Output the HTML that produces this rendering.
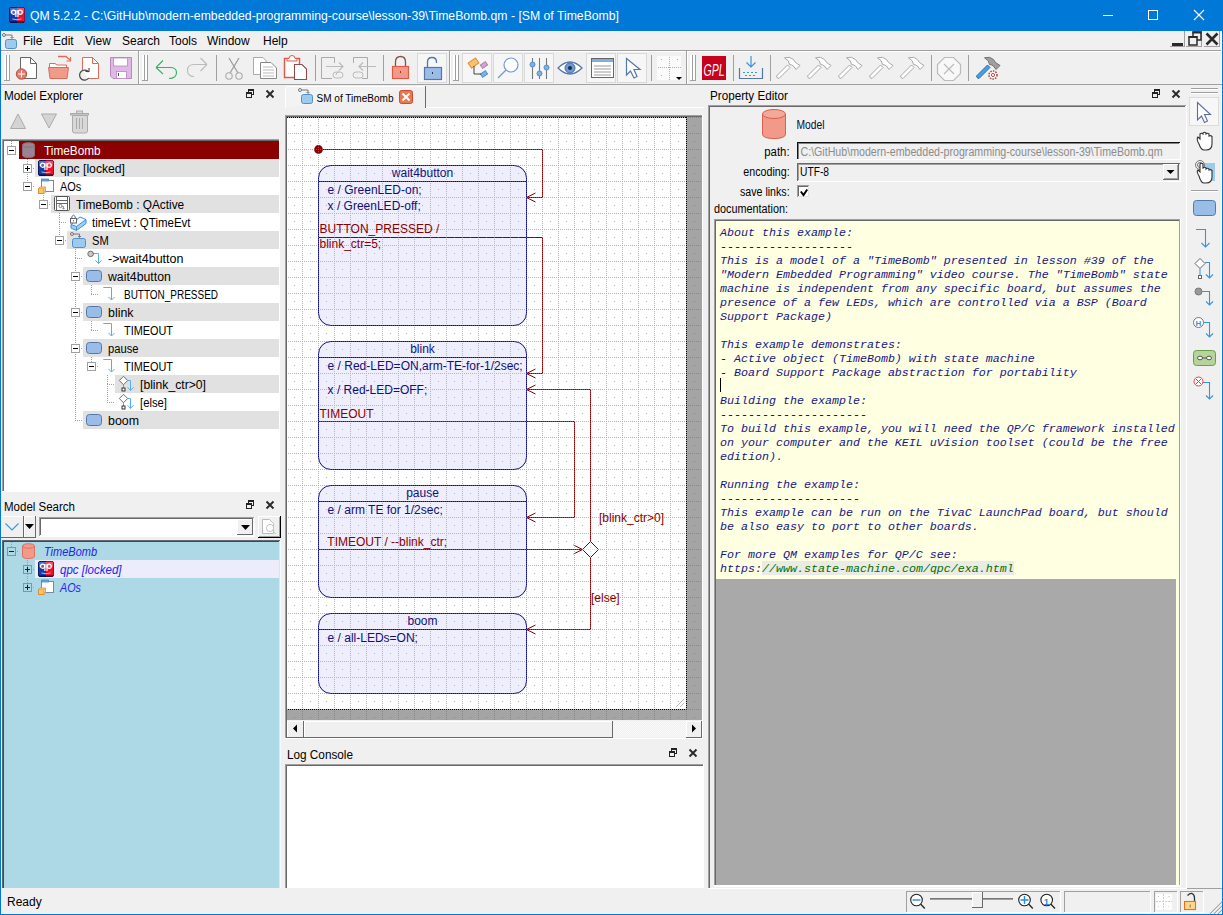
<!DOCTYPE html><html><head><meta charset="utf-8"><style>*{margin:0;padding:0}html,body{width:1223px;height:915px;overflow:hidden;background:#f0f0f0}svg{display:block}</style></head><body><svg width="1223" height="915" viewBox="0 0 1223 915" shape-rendering="auto"><rect x="0" y="0" width="1223" height="915" fill="#f0f0f0" />
<rect x="0" y="0" width="1223" height="31" fill="#0078d7" />
<text x="30" y="20" font-family="Liberation Sans" font-size="12" fill="#fff" textLength="589" lengthAdjust="spacingAndGlyphs" >QM 5.2.2 - C:\GitHub\modern-embedded-programming-course\lesson-39\TimeBomb.qm - [SM of TimeBomb]</text>
<rect x="1103" y="15" width="10" height="1" fill="#fff"/>
<rect x="1148.5" y="10.5" width="9" height="9" fill="none" stroke="#fff" stroke-width="1"/>
<path d="M1194 10 L1204 20 M1204 10 L1194 20" stroke="#fff" stroke-width="1.1"/>
<rect x="0" y="0" width="1" height="915" fill="#0078d7"/>
<rect x="1222" y="0" width="1" height="915" fill="#0078d7"/>
<rect x="0" y="914" width="1223" height="1" fill="#0078d7"/>
<rect x="1" y="50" width="1221" height="1" fill="#a0a0a0"/>
<rect x="1" y="51" width="1221" height="1" fill="#fff"/>
<text x="23" y="45" font-family="Liberation Sans" font-size="12" fill="#000" >File</text>
<text x="53" y="45" font-family="Liberation Sans" font-size="12" fill="#000" >Edit</text>
<text x="85" y="45" font-family="Liberation Sans" font-size="12" fill="#000" >View</text>
<text x="122" y="45" font-family="Liberation Sans" font-size="12" fill="#000" >Search</text>
<text x="169" y="45" font-family="Liberation Sans" font-size="12" fill="#000" >Tools</text>
<text x="207" y="45" font-family="Liberation Sans" font-size="12" fill="#000" >Window</text>
<text x="263" y="45" font-family="Liberation Sans" font-size="12" fill="#000" >Help</text>
<g transform="translate(2,33) scale(1.0)"><circle cx="2" cy="2" r="1.5" fill="none" stroke="#777" stroke-width="1"/><path d="M3.5 2 H10 V5" fill="none" stroke="#777" stroke-width="1"/><path d="M8.5 4 L10 5.5 L11.5 4" fill="none" stroke="#777" stroke-width="1"/><rect x="3.5" y="6.5" width="11" height="9" rx="2" fill="#9ccbee" stroke="#4f8fd0" stroke-width="1"/></g>
<rect x="1184" y="31" width="1" height="16" fill="#a0a0a0"/>
<rect x="1170" y="46" width="15" height="1" fill="#a0a0a0"/>
<rect x="1201" y="31" width="1" height="16" fill="#a0a0a0"/>
<rect x="1186" y="46" width="16" height="1" fill="#a0a0a0"/>
<rect x="1219" y="31" width="1" height="16" fill="#a0a0a0"/>
<rect x="1204" y="46" width="16" height="1" fill="#a0a0a0"/>
<rect x="1172" y="43" width="11" height="3" fill="#2a2a2a" />
<rect x="1193" y="32" width="8" height="8" fill="none" stroke="#2a2a2a" stroke-width="1.5"/><rect x="1192.5" y="31.5" width="9" height="2" fill="#2a2a2a"/>
<rect x="1189" y="37" width="8" height="8" fill="#f0f0f0" stroke="#2a2a2a" stroke-width="1.5"/><rect x="1188.5" y="36" width="9" height="2" fill="#2a2a2a"/>
<path d="M1206.5 33.5 L1217.5 44.5 M1217.5 33.5 L1206.5 44.5" stroke="#2a2a2a" stroke-width="2.6"/>
<rect x="1221" y="31" width="1" height="857" fill="#fff"/>
<rect x="1" y="84" width="1221" height="1" fill="#a0a0a0"/>
<text x="4" y="100" font-family="Liberation Sans" font-size="12" fill="#000" textLength="79" lengthAdjust="spacingAndGlyphs" >Model Explorer</text>
<g transform="translate(246,89)"><rect x="2.5" y="0.5" width="5" height="5" fill="none" stroke="#222" stroke-width="1"/><rect x="2" y="0" width="6" height="2" fill="#222"/><rect x="0.5" y="3.5" width="5" height="5" fill="#f0f0f0" stroke="#222" stroke-width="1"/><rect x="0" y="3" width="6" height="2" fill="#222"/></g>
<path d="M266.5 90.5 L273.5 97.5 M273.5 90.5 L266.5 97.5" stroke="#2a2a2a" stroke-width="1.9"/>
<path d="M10.5 128.5 L18 114 L25.5 128.5 Z" fill="#d4d4d4" stroke="#ababab" stroke-width="1"/>
<path d="M41.5 114 L56.5 114 L49 128 Z" fill="#d4d4d4" stroke="#ababab" stroke-width="1"/>
<g fill="#d8d8d8" stroke="#ababab" stroke-width="1"><path d="M72.5 115.5 H87.5 V131 Q87.5 133 85.5 133 H74.5 Q72.5 133 72.5 131 Z"/><rect x="70.5" y="113.5" width="18" height="1.5"/><rect x="76.5" y="111" width="6" height="2.5"/></g>
<path d="M76.5 118 V129 M79.5 118 V129 M82.5 118 V129" stroke="#aaa" stroke-width="1"/>
<rect x="2" y="139" width="280" height="353" fill="#fff" />
<rect x="280" y="139" width="2" height="353" fill="#f0f0f0" />
<rect x="2" y="139" width="278" height="1" fill="#a0a0a0"/>
<rect x="2" y="139" width="1" height="353" fill="#a0a0a0"/>
<rect x="3" y="140" width="276" height="1" fill="#696969"/>
<rect x="3" y="140" width="1" height="352" fill="#696969"/>
<rect x="279" y="139" width="1" height="353" fill="#fff"/>
<rect x="2" y="491" width="278" height="1" fill="#fff"/>
<rect x="19" y="141" width="260" height="18" fill="#8b0000" />
<rect x="35" y="159" width="244" height="18" fill="#e1e1e1" />
<rect x="51" y="195" width="228" height="18" fill="#e1e1e1" />
<rect x="67" y="231" width="212" height="18" fill="#e1e1e1" />
<rect x="83" y="267" width="196" height="18" fill="#e1e1e1" />
<rect x="83" y="303" width="196" height="18" fill="#e1e1e1" />
<rect x="83" y="339" width="196" height="18" fill="#e1e1e1" />
<rect x="115" y="375" width="164" height="18" fill="#e1e1e1" />
<rect x="83" y="411" width="196" height="18" fill="#e1e1e1" />
<line x1="11.5" y1="141" x2="11.5" y2="146" stroke="#a0a0a0" stroke-width="1" stroke-dasharray="1 1"/>
<line x1="27.5" y1="159" x2="27.5" y2="168" stroke="#a0a0a0" stroke-width="1" stroke-dasharray="1 1"/>
<line x1="27" y1="168.5" x2="35" y2="168.5" stroke="#a0a0a0" stroke-width="1" stroke-dasharray="1 1"/>
<line x1="27.5" y1="168" x2="27.5" y2="186" stroke="#a0a0a0" stroke-width="1" stroke-dasharray="1 1"/>
<line x1="27" y1="186.5" x2="35" y2="186.5" stroke="#a0a0a0" stroke-width="1" stroke-dasharray="1 1"/>
<line x1="43.5" y1="195" x2="43.5" y2="204" stroke="#a0a0a0" stroke-width="1" stroke-dasharray="1 1"/>
<line x1="43" y1="204.5" x2="51" y2="204.5" stroke="#a0a0a0" stroke-width="1" stroke-dasharray="1 1"/>
<line x1="59.5" y1="213" x2="59.5" y2="222" stroke="#a0a0a0" stroke-width="1" stroke-dasharray="1 1"/>
<line x1="59" y1="222.5" x2="67" y2="222.5" stroke="#a0a0a0" stroke-width="1" stroke-dasharray="1 1"/>
<line x1="59.5" y1="222" x2="59.5" y2="240" stroke="#a0a0a0" stroke-width="1" stroke-dasharray="1 1"/>
<line x1="59" y1="240.5" x2="67" y2="240.5" stroke="#a0a0a0" stroke-width="1" stroke-dasharray="1 1"/>
<line x1="75.5" y1="249" x2="75.5" y2="258" stroke="#a0a0a0" stroke-width="1" stroke-dasharray="1 1"/>
<line x1="75" y1="258.5" x2="83" y2="258.5" stroke="#a0a0a0" stroke-width="1" stroke-dasharray="1 1"/>
<line x1="75.5" y1="258" x2="75.5" y2="276" stroke="#a0a0a0" stroke-width="1" stroke-dasharray="1 1"/>
<line x1="75" y1="276.5" x2="83" y2="276.5" stroke="#a0a0a0" stroke-width="1" stroke-dasharray="1 1"/>
<line x1="91.5" y1="285" x2="91.5" y2="294" stroke="#a0a0a0" stroke-width="1" stroke-dasharray="1 1"/>
<line x1="91" y1="294.5" x2="99" y2="294.5" stroke="#a0a0a0" stroke-width="1" stroke-dasharray="1 1"/>
<line x1="75.5" y1="276" x2="75.5" y2="312" stroke="#a0a0a0" stroke-width="1" stroke-dasharray="1 1"/>
<line x1="75" y1="312.5" x2="83" y2="312.5" stroke="#a0a0a0" stroke-width="1" stroke-dasharray="1 1"/>
<line x1="91.5" y1="321" x2="91.5" y2="330" stroke="#a0a0a0" stroke-width="1" stroke-dasharray="1 1"/>
<line x1="91" y1="330.5" x2="99" y2="330.5" stroke="#a0a0a0" stroke-width="1" stroke-dasharray="1 1"/>
<line x1="75.5" y1="312" x2="75.5" y2="348" stroke="#a0a0a0" stroke-width="1" stroke-dasharray="1 1"/>
<line x1="75" y1="348.5" x2="83" y2="348.5" stroke="#a0a0a0" stroke-width="1" stroke-dasharray="1 1"/>
<line x1="91.5" y1="357" x2="91.5" y2="366" stroke="#a0a0a0" stroke-width="1" stroke-dasharray="1 1"/>
<line x1="91" y1="366.5" x2="99" y2="366.5" stroke="#a0a0a0" stroke-width="1" stroke-dasharray="1 1"/>
<line x1="107.5" y1="375" x2="107.5" y2="384" stroke="#a0a0a0" stroke-width="1" stroke-dasharray="1 1"/>
<line x1="107" y1="384.5" x2="115" y2="384.5" stroke="#a0a0a0" stroke-width="1" stroke-dasharray="1 1"/>
<line x1="107.5" y1="384" x2="107.5" y2="402" stroke="#a0a0a0" stroke-width="1" stroke-dasharray="1 1"/>
<line x1="107" y1="402.5" x2="115" y2="402.5" stroke="#a0a0a0" stroke-width="1" stroke-dasharray="1 1"/>
<line x1="75.5" y1="348" x2="75.5" y2="420" stroke="#a0a0a0" stroke-width="1" stroke-dasharray="1 1"/>
<line x1="75" y1="420.5" x2="83" y2="420.5" stroke="#a0a0a0" stroke-width="1" stroke-dasharray="1 1"/>
<rect x="7.5" y="146.5" width="8" height="8" fill="#fff" stroke="#a0a0a0" stroke-width="1"/>
<rect x="9" y="150" width="5" height="1" fill="#000"/>
<g transform="translate(22,142)"><path d="M0.5 3 V13 Q0.5 15.5 6.5 15.5 Q12.5 15.5 12.5 13 V3" fill="#9c8394" stroke="#8a6f80"/><ellipse cx="6.5" cy="3" rx="6" ry="2.3" fill="#9c8394" stroke="#8a6f80"/></g>
<text x="44" y="154.5" font-family="Liberation Sans" font-size="12" fill="#fff" textLength="56.6" lengthAdjust="spacingAndGlyphs" >TimeBomb</text>
<rect x="23.5" y="164.5" width="8" height="8" fill="#fff" stroke="#a0a0a0" stroke-width="1"/>
<rect x="25" y="168" width="5" height="1" fill="#000"/>
<rect x="27" y="166" width="1" height="5" fill="#000"/>
<g transform="translate(38,160)"><rect x="0.5" y="0.5" width="15" height="15" rx="1.5" fill="#1838a8" stroke="#0c1a60"/><path d="M8 0.5 H14 Q15.5 0.5 15.5 2 V14 Q15.5 15.5 14 15.5 H8 Z" fill="#f0102a"/><path d="M1 1 H15 V6 Q8 8 1 6 Z" fill="#fff" opacity="0.25"/><circle cx="4.6" cy="5.2" r="2.1" fill="none" stroke="#fff" stroke-width="1.2"/><path d="M6.9 3 V10" stroke="#fff" stroke-width="1.2"/><circle cx="11.2" cy="5.2" r="2.1" fill="none" stroke="#fff" stroke-width="1.2"/><path d="M9 3 V10" stroke="#fff" stroke-width="1.2"/><path d="M3.5 12 Q8 13.5 12.5 12" fill="none" stroke="#fff" stroke-width="0.8" opacity="0.8"/><path d="M1 15 H15" stroke="#000830" stroke-width="1"/></g>
<text x="60" y="172.5" font-family="Liberation Sans" font-size="12" fill="#000" textLength="65" lengthAdjust="spacingAndGlyphs" >qpc [locked]</text>
<rect x="23.5" y="182.5" width="8" height="8" fill="#fff" stroke="#a0a0a0" stroke-width="1"/>
<rect x="25" y="186" width="5" height="1" fill="#000"/>
<g transform="translate(38,178)"><rect x="3.5" y="2.5" width="12" height="11" fill="#fff" stroke="#7a8a96"/><rect x="3.5" y="1" width="7" height="2" fill="#6aa8e0" stroke="#4a88c8" stroke-width="0.8"/><rect x="0.5" y="10.5" width="5.5" height="5" fill="#f7c46a" stroke="#e09030"/><path d="M0.5 10.5 L2 9 H7.5 L6 10.5 M7.5 9 V14 L6 15.5" fill="#f9d890" stroke="#e09030" stroke-width="0.8"/></g>
<text x="60" y="190.5" font-family="Liberation Sans" font-size="12" fill="#000" textLength="21.3" lengthAdjust="spacingAndGlyphs" >AOs</text>
<rect x="39.5" y="200.5" width="8" height="8" fill="#fff" stroke="#a0a0a0" stroke-width="1"/>
<rect x="41" y="204" width="5" height="1" fill="#000"/>
<g transform="translate(54,196)"><rect x="0.5" y="0.5" width="15" height="14" rx="1" fill="#fff" stroke="#555"/><path d="M2.5 0.5 V14.5 M13.5 0.5 V14.5 M2.5 4.5 H13.5 M2.5 7.5 H13.5" stroke="#666" stroke-width="1"/><circle cx="6.5" cy="10" r="1.6" fill="none" stroke="#777" stroke-width="0.9"/><path d="M8 10.5 H9.5 V13 M8.5 12 L9.5 13.2 L10.5 12" fill="none" stroke="#777" stroke-width="0.8"/></g>
<text x="76" y="208.5" font-family="Liberation Sans" font-size="12" fill="#000" textLength="108.2" lengthAdjust="spacingAndGlyphs" >TimeBomb : QActive</text>
<g transform="translate(70,214)"><path d="M1 10.5 L1 14 L6.5 16.5 L16 9.5 L16 5.5 Z" fill="#a4cff2" stroke="#3a8ee0" stroke-width="1" stroke-linejoin="round"/><path d="M1 10.5 L10 3 L16 5.5 L6.5 12.5 Z" fill="#f2f8fe" stroke="#3a8ee0" stroke-width="1" stroke-linejoin="round"/><path d="M6.5 12.5 V16.5" stroke="#3a8ee0"/><path d="M1.8 4.5 V2.5 Q3.5 -0.2 5.2 2.5 V4.5" fill="none" stroke="#666" stroke-width="1"/><rect x="0.5" y="4.5" width="6" height="4.5" fill="#fff" stroke="#666"/><rect x="3" y="6.3" width="1" height="1" fill="#444"/></g>
<text x="92" y="226.5" font-family="Liberation Sans" font-size="12" fill="#000" textLength="98.5" lengthAdjust="spacingAndGlyphs" >timeEvt : QTimeEvt</text>
<rect x="55.5" y="236.5" width="8" height="8" fill="#fff" stroke="#a0a0a0" stroke-width="1"/>
<rect x="57" y="240" width="5" height="1" fill="#000"/>
<g transform="translate(70,232)"><circle cx="2" cy="2" r="1.5" fill="#ddd" stroke="#777" stroke-width="1"/><path d="M3.5 2 H9.5 V5" fill="none" stroke="#777"/><path d="M8 4 L9.5 5.5 L11 4" fill="none" stroke="#777"/><rect x="2.5" y="6.5" width="13" height="9" rx="2" fill="#9ccbee" stroke="#4f8fd0"/></g>
<text x="92" y="244.5" font-family="Liberation Sans" font-size="12" fill="#000" textLength="16.7" lengthAdjust="spacingAndGlyphs" >SM</text>
<g transform="translate(86,250)"><path d="M7 3.5 H12.5 V13.5" fill="none" stroke="#5aaee6"/><path d="M9.3 10.3 L12.5 13.6 L15.7 10.3" fill="none" stroke="#5aaee6"/><circle cx="4.6" cy="3.9" r="2.8" fill="#c8c8c8" stroke="#666" stroke-width="0.9"/></g>
<text x="108" y="262.5" font-family="Liberation Sans" font-size="12" fill="#000" textLength="75.5" lengthAdjust="spacingAndGlyphs" >-&gt;wait4button</text>
<rect x="71.5" y="272.5" width="8" height="8" fill="#fff" stroke="#a0a0a0" stroke-width="1"/>
<rect x="73" y="276" width="5" height="1" fill="#000"/>
<g transform="translate(86,268)"><rect x="0.5" y="2.5" width="15" height="11" rx="3" fill="#9abde8" stroke="#5576a8"/></g>
<text x="108" y="280.5" font-family="Liberation Sans" font-size="12" fill="#000" textLength="62.8" lengthAdjust="spacingAndGlyphs" >wait4button</text>
<g transform="translate(102,286)"><path d="M1.3 1.5 H9.5 V13.8" fill="none" stroke="#5aaee6"/><path d="M6.5 11 L9.5 14 L12.5 11" fill="none" stroke="#5aaee6"/></g>
<text x="124" y="298.5" font-family="Liberation Sans" font-size="12" fill="#000" textLength="94" lengthAdjust="spacingAndGlyphs" >BUTTON_PRESSED</text>
<rect x="71.5" y="308.5" width="8" height="8" fill="#fff" stroke="#a0a0a0" stroke-width="1"/>
<rect x="73" y="312" width="5" height="1" fill="#000"/>
<g transform="translate(86,304)"><rect x="0.5" y="2.5" width="15" height="11" rx="3" fill="#9abde8" stroke="#5576a8"/></g>
<text x="108" y="316.5" font-family="Liberation Sans" font-size="12" fill="#000" textLength="25.5" lengthAdjust="spacingAndGlyphs" >blink</text>
<g transform="translate(102,322)"><path d="M1.3 1.5 H9.5 V13.8" fill="none" stroke="#5aaee6"/><path d="M6.5 11 L9.5 14 L12.5 11" fill="none" stroke="#5aaee6"/></g>
<text x="124" y="334.5" font-family="Liberation Sans" font-size="12" fill="#000" textLength="49" lengthAdjust="spacingAndGlyphs" >TIMEOUT</text>
<rect x="71.5" y="344.5" width="8" height="8" fill="#fff" stroke="#a0a0a0" stroke-width="1"/>
<rect x="73" y="348" width="5" height="1" fill="#000"/>
<g transform="translate(86,340)"><rect x="0.5" y="2.5" width="15" height="11" rx="3" fill="#9abde8" stroke="#5576a8"/></g>
<text x="108" y="352.5" font-family="Liberation Sans" font-size="12" fill="#000" textLength="30.5" lengthAdjust="spacingAndGlyphs" >pause</text>
<rect x="87.5" y="362.5" width="8" height="8" fill="#fff" stroke="#a0a0a0" stroke-width="1"/>
<rect x="89" y="366" width="5" height="1" fill="#000"/>
<g transform="translate(102,358)"><path d="M1.3 1.5 H9.5 V13.8" fill="none" stroke="#5aaee6"/><path d="M6.5 11 L9.5 14 L12.5 11" fill="none" stroke="#5aaee6"/></g>
<text x="124" y="370.5" font-family="Liberation Sans" font-size="12" fill="#000" textLength="49" lengthAdjust="spacingAndGlyphs" >TIMEOUT</text>
<g transform="translate(118,376)"><path d="M9.5 4.5 H12.5 V14.4" fill="none" stroke="#5aaee6"/><path d="M9.6 11.3 L12.5 14.4 L15.6 11.3" fill="none" stroke="#5aaee6"/><path d="M5.5 8.5 V12" stroke="#5aaee6"/><path d="M5.5 0.3 L9.7 4.5 L5.5 8.7 L1.3 4.5 Z" fill="#fff" stroke="#6a5a5a" stroke-width="0.9"/><rect x="4" y="12" width="3" height="3" fill="#fff" stroke="#222" stroke-width="0.9"/></g>
<text x="140" y="388.5" font-family="Liberation Sans" font-size="12" fill="#000" textLength="66" lengthAdjust="spacingAndGlyphs" >[blink_ctr&gt;0]</text>
<g transform="translate(118,394)"><path d="M9.5 4.5 H12.5 V14.4" fill="none" stroke="#5aaee6"/><path d="M9.6 11.3 L12.5 14.4 L15.6 11.3" fill="none" stroke="#5aaee6"/><path d="M5.5 8.5 V12" stroke="#5aaee6"/><path d="M5.5 0.3 L9.7 4.5 L5.5 8.7 L1.3 4.5 Z" fill="#fff" stroke="#6a5a5a" stroke-width="0.9"/><rect x="4" y="12" width="3" height="3" fill="#fff" stroke="#222" stroke-width="0.9"/></g>
<text x="140" y="406.5" font-family="Liberation Sans" font-size="12" fill="#000" textLength="27" lengthAdjust="spacingAndGlyphs" >[else]</text>
<g transform="translate(86,412)"><rect x="0.5" y="2.5" width="15" height="11" rx="3" fill="#9abde8" stroke="#5576a8"/></g>
<text x="108" y="424.5" font-family="Liberation Sans" font-size="12" fill="#000" textLength="31" lengthAdjust="spacingAndGlyphs" >boom</text>
<text x="4" y="510.5" font-family="Liberation Sans" font-size="12" fill="#000" textLength="71" lengthAdjust="spacingAndGlyphs" >Model Search</text>
<g transform="translate(246,500)"><rect x="2.5" y="0.5" width="5" height="5" fill="none" stroke="#222" stroke-width="1"/><rect x="2" y="0" width="6" height="2" fill="#222"/><rect x="0.5" y="3.5" width="5" height="5" fill="#f0f0f0" stroke="#222" stroke-width="1"/><rect x="0" y="3" width="6" height="2" fill="#222"/></g>
<path d="M266.5 501.5 L273.5 508.5 M273.5 501.5 L266.5 508.5" stroke="#2a2a2a" stroke-width="1.9"/>
<rect x="1" y="516" width="23" height="1" fill="#fff"/>
<rect x="1" y="516" width="1" height="22" fill="#fff"/>
<rect x="1" y="537" width="23" height="1" fill="#696969"/>
<rect x="23" y="516" width="1" height="22" fill="#696969"/>
<path d="M5.5 523.5 L12 530 L18.5 523.5" fill="none" stroke="#3b9ad9" stroke-width="1.2"/>
<rect x="24" y="516" width="12" height="1" fill="#fff"/>
<rect x="24" y="516" width="1" height="22" fill="#fff"/>
<rect x="24" y="537" width="12" height="1" fill="#696969"/>
<rect x="35" y="516" width="1" height="22" fill="#696969"/>
<path d="M25 524 H34 L29.5 529 Z" fill="#000"/>
<rect x="39" y="517" width="215" height="19" fill="#fff" />
<rect x="39" y="517" width="215" height="1" fill="#a0a0a0"/>
<rect x="39" y="517" width="1" height="19" fill="#a0a0a0"/>
<rect x="40" y="518" width="213" height="1" fill="#696969"/>
<rect x="40" y="518" width="1" height="17" fill="#696969"/>
<rect x="39" y="536" width="216" height="1" fill="#fff"/>
<rect x="254" y="517" width="1" height="20" fill="#fff"/>
<rect x="237" y="519" width="16" height="16" fill="#f0f0f0" />
<rect x="237" y="519" width="16" height="1" fill="#fff"/>
<rect x="237" y="519" width="1" height="16" fill="#fff"/>
<rect x="237" y="534" width="16" height="1" fill="#696969"/>
<rect x="252" y="519" width="1" height="16" fill="#696969"/>
<path d="M241 525 H250 L245.5 530 Z" fill="#000"/>
<rect x="258" y="516" width="23" height="1" fill="#fff"/>
<rect x="258" y="516" width="1" height="22" fill="#fff"/>
<rect x="258" y="537" width="23" height="1" fill="#000"/>
<rect x="280" y="516" width="1" height="22" fill="#000"/>
<rect x="279" y="517" width="1" height="20" fill="#a0a0a0"/>
<rect x="259" y="536" width="21" height="1" fill="#a0a0a0"/>
<path d="M262.5 519.5 H269.5 L273.5 523.5 V533.5 H262.5 Z" fill="#fff" stroke="#bbb"/><circle cx="270" cy="528" r="3.6" fill="#fff" stroke="#c4c4c4"/><path d="M272.5 530.5 L276 534" stroke="#c4c4c4"/>
<rect x="2" y="540" width="279" height="348" fill="#add8e6" />
<rect x="2" y="540" width="278" height="1" fill="#606a70"/>
<rect x="2" y="540" width="1" height="348" fill="#606a70"/>
<rect x="3" y="541" width="276" height="1" fill="#3c4c54"/>
<rect x="3" y="541" width="1" height="347" fill="#3c4c54"/>
<rect x="279" y="541" width="1" height="347" fill="#c8ecf8"/>
<rect x="280" y="540" width="1" height="348" fill="#f4fcff"/>
<rect x="35" y="560" width="244" height="18" fill="#ececfb" />
<line x1="11.5" y1="542" x2="11.5" y2="547" stroke="#8aa" stroke-width="1" stroke-dasharray="1 1"/>
<line x1="27.5" y1="560" x2="27.5" y2="587" stroke="#8aa" stroke-width="1" stroke-dasharray="1 1"/>
<line x1="27" y1="569.5" x2="35" y2="569.5" stroke="#8aa" stroke-width="1" stroke-dasharray="1 1"/>
<line x1="27" y1="587.5" x2="35" y2="587.5" stroke="#8aa" stroke-width="1" stroke-dasharray="1 1"/>
<line x1="11" y1="551.5" x2="19" y2="551.5" stroke="#8aa" stroke-width="1" stroke-dasharray="1 1"/>
<rect x="7.5" y="547.5" width="8" height="8" fill="none" stroke="#909090" stroke-width="1"/>
<rect x="9" y="551" width="5" height="1" fill="#00f"/>
<g transform="translate(22,543)"><path d="M0.5 3 V13 Q0.5 15.5 6.5 15.5 Q12.5 15.5 12.5 13 V3" fill="#f29a8a" stroke="#e07060"/><ellipse cx="6.5" cy="3" rx="6" ry="2.3" fill="#f29a8a" stroke="#e07060"/></g>
<text x="44" y="555.5" font-family="Liberation Sans" font-size="12" fill="#2424f0" textLength="53" lengthAdjust="spacingAndGlyphs" font-style="italic">TimeBomb</text>
<rect x="23.5" y="565.5" width="8" height="8" fill="none" stroke="#909090" stroke-width="1"/>
<rect x="25" y="569" width="5" height="1" fill="#00f"/>
<rect x="27" y="567" width="1" height="5" fill="#00f"/>
<g transform="translate(38,561)"><rect x="0.5" y="0.5" width="15" height="15" rx="1.5" fill="#1838a8" stroke="#0c1a60"/><path d="M8 0.5 H14 Q15.5 0.5 15.5 2 V14 Q15.5 15.5 14 15.5 H8 Z" fill="#f0102a"/><path d="M1 1 H15 V6 Q8 8 1 6 Z" fill="#fff" opacity="0.25"/><circle cx="4.6" cy="5.2" r="2.1" fill="none" stroke="#fff" stroke-width="1.2"/><path d="M6.9 3 V10" stroke="#fff" stroke-width="1.2"/><circle cx="11.2" cy="5.2" r="2.1" fill="none" stroke="#fff" stroke-width="1.2"/><path d="M9 3 V10" stroke="#fff" stroke-width="1.2"/><path d="M3.5 12 Q8 13.5 12.5 12" fill="none" stroke="#fff" stroke-width="0.8" opacity="0.8"/><path d="M1 15 H15" stroke="#000830" stroke-width="1"/></g>
<text x="60" y="573.5" font-family="Liberation Sans" font-size="12" fill="#2424f0" textLength="61.5" lengthAdjust="spacingAndGlyphs" font-style="italic">qpc [locked]</text>
<rect x="23.5" y="583.5" width="8" height="8" fill="none" stroke="#909090" stroke-width="1"/>
<rect x="25" y="587" width="5" height="1" fill="#00f"/>
<rect x="27" y="585" width="1" height="5" fill="#00f"/>
<g transform="translate(38,579)"><rect x="3.5" y="2.5" width="12" height="11" fill="#fff" stroke="#7a8a96"/><rect x="3.5" y="1" width="7" height="2" fill="#6aa8e0" stroke="#4a88c8" stroke-width="0.8"/><rect x="0.5" y="10.5" width="5.5" height="5" fill="#f7c46a" stroke="#e09030"/><path d="M0.5 10.5 L2 9 H7.5 L6 10.5 M7.5 9 V14 L6 15.5" fill="#f9d890" stroke="#e09030" stroke-width="0.8"/></g>
<text x="60" y="591.5" font-family="Liberation Sans" font-size="12" fill="#2424f0" textLength="21" lengthAdjust="spacingAndGlyphs" font-style="italic">AOs</text>
<path d="M285.5 108 V87.5 Q285.5 86.5 287 86.5 H425" fill="#f3f3f3" stroke="#fff"/>
<rect x="425" y="86" width="1" height="22" fill="#696969"/>
<rect x="426" y="107" width="278" height="1" fill="#fff"/>
<g transform="translate(298,88) scale(1.0)"><circle cx="2" cy="2" r="1.5" fill="none" stroke="#777" stroke-width="1"/><path d="M3.5 2 H10 V5" fill="none" stroke="#777" stroke-width="1"/><path d="M8.5 4 L10 5.5 L11.5 4" fill="none" stroke="#777" stroke-width="1"/><rect x="3.5" y="6.5" width="11" height="9" rx="2" fill="#9ccbee" stroke="#4f8fd0" stroke-width="1"/></g>
<text x="316.5" y="101.5" font-family="Liberation Sans" font-size="10" fill="#000" textLength="77" lengthAdjust="spacingAndGlyphs" >SM of TimeBomb</text>
<rect x="399.5" y="90.5" width="13" height="13" rx="2" fill="#e9784f" stroke="#d24a30"/><path d="M402.5 93.5 L409.5 100.5 M409.5 93.5 L402.5 100.5" stroke="#fff" stroke-width="2"/>
<defs><pattern id="grid" x="14" y="5" width="16" height="16" patternUnits="userSpaceOnUse"><path d="M0 0 H1 V16 H0 Z" fill="none"/><rect x="0" y="0" width="1" height="1" fill="#b6b6b6"/><rect x="0" y="2" width="1" height="1" fill="#b6b6b6"/><rect x="0" y="4" width="1" height="1" fill="#b6b6b6"/><rect x="0" y="6" width="1" height="1" fill="#b6b6b6"/><rect x="0" y="8" width="1" height="1" fill="#b6b6b6"/><rect x="0" y="10" width="1" height="1" fill="#b6b6b6"/><rect x="0" y="12" width="1" height="1" fill="#b6b6b6"/><rect x="0" y="14" width="1" height="1" fill="#b6b6b6"/><rect x="2" y="0" width="1" height="1" fill="#b6b6b6"/><rect x="4" y="0" width="1" height="1" fill="#b6b6b6"/><rect x="6" y="0" width="1" height="1" fill="#b6b6b6"/><rect x="8" y="0" width="1" height="1" fill="#b6b6b6"/><rect x="10" y="0" width="1" height="1" fill="#b6b6b6"/><rect x="12" y="0" width="1" height="1" fill="#b6b6b6"/><rect x="14" y="0" width="1" height="1" fill="#b6b6b6"/><rect x="8" y="8" width="1" height="1" fill="#b6b6b6"/></pattern><pattern id="grid2" x="14" y="5" width="16" height="16" patternUnits="userSpaceOnUse"><rect x="0" y="0" width="1" height="1" fill="#888"/><rect x="0" y="2" width="1" height="1" fill="#888"/><rect x="0" y="4" width="1" height="1" fill="#888"/><rect x="0" y="6" width="1" height="1" fill="#888"/><rect x="0" y="8" width="1" height="1" fill="#888"/><rect x="0" y="10" width="1" height="1" fill="#888"/><rect x="0" y="12" width="1" height="1" fill="#888"/><rect x="0" y="14" width="1" height="1" fill="#888"/><rect x="2" y="0" width="1" height="1" fill="#888"/><rect x="4" y="0" width="1" height="1" fill="#888"/><rect x="6" y="0" width="1" height="1" fill="#888"/><rect x="8" y="0" width="1" height="1" fill="#888"/><rect x="10" y="0" width="1" height="1" fill="#888"/><rect x="12" y="0" width="1" height="1" fill="#888"/><rect x="14" y="0" width="1" height="1" fill="#888"/><rect x="8" y="8" width="1" height="1" fill="#888"/></pattern><clipPath id="cv"><rect x="287" y="118" width="415" height="602"/></clipPath></defs>
<rect x="287" y="117" width="415" height="603" fill="#a4a4a4" />
<rect x="287" y="117" width="415" height="603" fill="url(#grid2)"/>
<rect x="287" y="117" width="399" height="592" fill="#fff" />
<rect x="318.5" y="165.5" width="208" height="160" rx="12.5" ry="12.5" fill="#eeeefd"/>
<rect x="318.5" y="341.5" width="208" height="128" rx="12.5" ry="12.5" fill="#eeeefd"/>
<rect x="318.5" y="485.5" width="208" height="112" rx="12.5" ry="12.5" fill="#eeeefd"/>
<rect x="318.5" y="613.5" width="208" height="80" rx="12.5" ry="12.5" fill="#eeeefd"/>
<rect x="287" y="117" width="399" height="592" fill="url(#grid)"/>
<path d="M686.5 117 V709.5 H287" fill="none" stroke="#000" stroke-width="1" stroke-dasharray="1 1"/>
<path d="M287 117.5 H686" fill="none" stroke="#000" stroke-width="1" stroke-dasharray="1 1"/>
<path d="M676 707 L684 699 M680 707 L684 703" stroke="#bbb" stroke-width="1"/>
<rect x="285" y="115" width="417" height="1" fill="#a0a0a0"/>
<rect x="285" y="115" width="1" height="623" fill="#a0a0a0"/>
<rect x="286" y="116" width="416" height="1" fill="#696969"/>
<rect x="286" y="116" width="1" height="622" fill="#696969"/>
<rect x="702" y="115" width="1" height="624" fill="#fff"/>
<rect x="287" y="721" width="415" height="17" fill="#f0f0f0" />
<defs><pattern id="chk" x="0" y="0" width="2" height="2" patternUnits="userSpaceOnUse"><rect width="2" height="2" fill="#f0f0f0"/><rect width="1" height="1" fill="#fafafa"/><rect x="1" y="1" width="1" height="1" fill="#fafafa"/></pattern></defs>
<rect x="612" y="721" width="74" height="16" fill="url(#chk)"/>
<rect x="287" y="721" width="17" height="1" fill="#fff"/>
<rect x="287" y="721" width="1" height="17" fill="#fff"/>
<rect x="287" y="737" width="17" height="1" fill="#696969"/>
<rect x="303" y="721" width="1" height="17" fill="#696969"/>
<path d="M293 728.5 L297 724.5 V732.5 Z" fill="#000"/>
<rect x="304" y="721" width="309" height="1" fill="#fff"/>
<rect x="304" y="721" width="1" height="17" fill="#fff"/>
<rect x="304" y="737" width="309" height="1" fill="#696969"/>
<rect x="612" y="721" width="1" height="17" fill="#696969"/>
<rect x="686" y="721" width="16" height="1" fill="#fff"/>
<rect x="686" y="721" width="1" height="17" fill="#fff"/>
<rect x="686" y="737" width="16" height="1" fill="#696969"/>
<rect x="701" y="721" width="1" height="17" fill="#696969"/>
<path d="M696 728.5 L692 724.5 V732.5 Z" fill="#000"/>
<rect x="285" y="738" width="418" height="1" fill="#fff"/>
<g clip-path="url(#cv)">
<rect x="318.5" y="165.5" width="208" height="160" rx="12.5" ry="12.5" fill="none" stroke="#0a0a86" stroke-width="1"/>
<rect x="318" y="181" width="209" height="1" fill="#0a0a86"/>
<text x="422.5" y="176.5" font-family="Liberation Sans" font-size="12" fill="#10107a" text-anchor="middle" >wait4button</text>
<rect x="318.5" y="341.5" width="208" height="128" rx="12.5" ry="12.5" fill="none" stroke="#0a0a86" stroke-width="1"/>
<rect x="318" y="357" width="209" height="1" fill="#0a0a86"/>
<text x="422.5" y="352.7" font-family="Liberation Sans" font-size="12" fill="#10107a" text-anchor="middle" >blink</text>
<rect x="318.5" y="485.5" width="208" height="112" rx="12.5" ry="12.5" fill="none" stroke="#0a0a86" stroke-width="1"/>
<rect x="318" y="501" width="209" height="1" fill="#0a0a86"/>
<text x="422.5" y="497.2" font-family="Liberation Sans" font-size="12" fill="#10107a" text-anchor="middle" >pause</text>
<rect x="318.5" y="613.5" width="208" height="80" rx="12.5" ry="12.5" fill="none" stroke="#0a0a86" stroke-width="1"/>
<rect x="318" y="629" width="209" height="1" fill="#0a0a86"/>
<text x="422.5" y="625.3" font-family="Liberation Sans" font-size="12" fill="#10107a" text-anchor="middle" >boom</text>
<circle cx="318.5" cy="149.5" r="4.4" fill="#8b0000"/>
<path d="M318 149.5 H542.5 V197.5 H527" fill="none" stroke="#8b0000" stroke-width="1"/>
<path d="M535.5 193 L526.5 197.5 L535.5 202" fill="none" stroke="#8b0000" stroke-width="1"/>
<path d="M318 237.5 H542.5 V373.5 H527" fill="none" stroke="#8b0000" stroke-width="1"/>
<path d="M535.5 369 L526.5 373.5 L535.5 378" fill="none" stroke="#8b0000" stroke-width="1"/>
<path d="M318 421.5 H574.5 V517.5 H527" fill="none" stroke="#8b0000" stroke-width="1"/>
<path d="M535.5 513 L526.5 517.5 L535.5 522" fill="none" stroke="#8b0000" stroke-width="1"/>
<path d="M318 549.5 H582" fill="none" stroke="#8b0000" stroke-width="1"/>
<path d="M573.5 545 L582.5 549.5 L573.5 554" fill="none" stroke="#8b0000" stroke-width="1"/>
<path d="M590.5 541.5 L598.5 549.5 L590.5 557.5 L582.5 549.5 Z" fill="#fff" stroke="#8b0000" stroke-width="1"/>
<path d="M590.5 541.5 V389.5 H527" fill="none" stroke="#8b0000" stroke-width="1"/>
<path d="M535.5 385 L526.5 389.5 L535.5 394" fill="none" stroke="#8b0000" stroke-width="1"/>
<path d="M590.5 557.5 V629.5 H527" fill="none" stroke="#8b0000" stroke-width="1"/>
<path d="M535.5 625 L526.5 629.5 L535.5 634" fill="none" stroke="#8b0000" stroke-width="1"/>
<rect x="287" y="117" width="399" height="592" fill="url(#grid)" opacity="0.4"/>
<text x="327.6" y="193.5" font-family="Liberation Sans" font-size="12" fill="#10107a" >e / GreenLED-on;</text>
<text x="327.6" y="209.8" font-family="Liberation Sans" font-size="12" fill="#10107a" >x / GreenLED-off;</text>
<text x="319.5" y="233.4" font-family="Liberation Sans" font-size="12" fill="#8b0000" >BUTTON_PRESSED /</text>
<text x="319.5" y="248.3" font-family="Liberation Sans" font-size="12" fill="#8b0000" >blink_ctr=5;</text>
<text x="327.6" y="369.7" font-family="Liberation Sans" font-size="12" fill="#10107a" >e / Red-LED=ON,arm-TE-for-1/2sec;</text>
<text x="327.6" y="393.5" font-family="Liberation Sans" font-size="12" fill="#10107a" >x / Red-LED=OFF;</text>
<text x="319.5" y="417.6" font-family="Liberation Sans" font-size="12" fill="#8b0000" >TIMEOUT</text>
<text x="327.6" y="514" font-family="Liberation Sans" font-size="12" fill="#10107a" >e / arm TE for 1/2sec;</text>
<text x="327.3" y="546" font-family="Liberation Sans" font-size="12" fill="#8b0000" >TIMEOUT / --blink_ctr;</text>
<text x="599" y="521.6" font-family="Liberation Sans" font-size="12" fill="#8b0000" >[blink_ctr&gt;0]</text>
<text x="591" y="602.2" font-family="Liberation Sans" font-size="12" fill="#8b0000" >[else]</text>
<text x="327.6" y="641.8" font-family="Liberation Sans" font-size="12" fill="#10107a" >e / all-LEDs=ON;</text>
</g>
<text x="287" y="759" font-family="Liberation Sans" font-size="12" fill="#000" textLength="66" lengthAdjust="spacingAndGlyphs" >Log Console</text>
<g transform="translate(669,748)"><rect x="2.5" y="0.5" width="5" height="5" fill="none" stroke="#222" stroke-width="1"/><rect x="2" y="0" width="6" height="2" fill="#222"/><rect x="0.5" y="3.5" width="5" height="5" fill="#f0f0f0" stroke="#222" stroke-width="1"/><rect x="0" y="3" width="6" height="2" fill="#222"/></g>
<path d="M689.5 749.5 L696.5 756.5 M696.5 749.5 L689.5 756.5" stroke="#2a2a2a" stroke-width="1.9"/>
<rect x="285" y="764" width="419" height="124" fill="#fff" />
<rect x="285" y="764" width="418" height="1" fill="#a0a0a0"/>
<rect x="285" y="764" width="1" height="124" fill="#a0a0a0"/>
<rect x="286" y="765" width="417" height="1" fill="#696969"/>
<rect x="286" y="765" width="1" height="123" fill="#696969"/>
<text x="710" y="100" font-family="Liberation Sans" font-size="12" fill="#000" textLength="78" lengthAdjust="spacingAndGlyphs" >Property Editor</text>
<g transform="translate(1152,89)"><rect x="2.5" y="0.5" width="5" height="5" fill="none" stroke="#222" stroke-width="1"/><rect x="2" y="0" width="6" height="2" fill="#222"/><rect x="0.5" y="3.5" width="5" height="5" fill="#f0f0f0" stroke="#222" stroke-width="1"/><rect x="0" y="3" width="6" height="2" fill="#222"/></g>
<path d="M1172.5 90.5 L1179.5 97.5 M1179.5 90.5 L1172.5 97.5" stroke="#2a2a2a" stroke-width="1.9"/>
<rect x="708" y="105" width="478" height="1" fill="#a0a0a0"/>
<rect x="708" y="105" width="1" height="783" fill="#a0a0a0"/>
<rect x="709" y="106" width="476" height="1" fill="#696969"/>
<rect x="709" y="106" width="1" height="782" fill="#696969"/>
<rect x="1186" y="105" width="1" height="784" fill="#fff"/>
<rect x="708" y="888" width="479" height="1" fill="#fff"/>
<rect x="1187" y="888" width="35" height="1" fill="#a0a0a0"/>
<g transform="translate(762,109)"><path d="M0.5 5 V25 Q0.5 29.5 12 29.5 Q23.5 29.5 23.5 25 V5" fill="#f29a8a" stroke="#d9604c"/><ellipse cx="12" cy="5" rx="11.5" ry="4.5" fill="#f4a898" stroke="#d9604c"/></g>
<text x="796.5" y="128.6" font-family="Liberation Sans" font-size="12" fill="#0a0a30" textLength="28" lengthAdjust="spacingAndGlyphs" >Model</text>
<text x="764.3" y="155.6" font-family="Liberation Sans" font-size="12" fill="#000" textLength="25.3" lengthAdjust="spacingAndGlyphs" >path:</text>
<text x="743.3" y="176" font-family="Liberation Sans" font-size="12" fill="#000" textLength="46.3" lengthAdjust="spacingAndGlyphs" >encoding:</text>
<text x="740" y="195.5" font-family="Liberation Sans" font-size="12" fill="#000" textLength="49.6" lengthAdjust="spacingAndGlyphs" >save links:</text>
<text x="714" y="213.3" font-family="Liberation Sans" font-size="12" fill="#000" textLength="74" lengthAdjust="spacingAndGlyphs" >documentation:</text>
<rect x="797" y="142" width="383" height="18" fill="#f0f0f0" />
<rect x="797" y="142" width="383" height="1" fill="#111"/>
<rect x="797" y="142" width="1" height="18" fill="#111"/>
<rect x="798" y="143" width="381" height="1" fill="#808080"/>
<rect x="798" y="143" width="1" height="16" fill="#808080"/>
<rect x="797" y="159" width="384" height="1" fill="#fff"/>
<rect x="1180" y="142" width="1" height="18" fill="#fff"/>
<text x="800.5" y="155.5" font-family="Liberation Sans" font-size="12" fill="#8c8c8c" textLength="362" lengthAdjust="spacingAndGlyphs" >C:\GitHub\modern-embedded-programming-course\lesson-39\TimeBomb.qm</text>
<rect x="797" y="163" width="383" height="18" fill="#f0f0f0" />
<rect x="797" y="163" width="383" height="1" fill="#696969"/>
<rect x="797" y="163" width="1" height="18" fill="#696969"/>
<rect x="798" y="164" width="381" height="1" fill="#a0a0a0"/>
<rect x="798" y="164" width="1" height="16" fill="#a0a0a0"/>
<rect x="797" y="181" width="384" height="1" fill="#fff"/>
<rect x="1180" y="163" width="1" height="19" fill="#fff"/>
<text x="800" y="176" font-family="Liberation Sans" font-size="12" fill="#000" textLength="29" lengthAdjust="spacingAndGlyphs" >UTF-8</text>
<rect x="1163" y="164" width="16" height="1" fill="#fff"/>
<rect x="1163" y="164" width="1" height="16" fill="#fff"/>
<rect x="1163" y="179" width="16" height="1" fill="#696969"/>
<rect x="1178" y="164" width="1" height="16" fill="#696969"/>
<rect x="1177" y="165" width="1" height="14" fill="#a0a0a0"/>
<rect x="1164" y="178" width="14" height="1" fill="#a0a0a0"/>
<path d="M1166.5 170 H1174.5 L1170.5 174 Z" fill="#000"/>
<rect x="797" y="185" width="12" height="12" fill="#fff" />
<rect x="797" y="185" width="12" height="1" fill="#a0a0a0"/>
<rect x="797" y="185" width="1" height="12" fill="#a0a0a0"/>
<rect x="798" y="186" width="10" height="1" fill="#696969"/>
<rect x="798" y="186" width="1" height="10" fill="#696969"/>
<rect x="798" y="196" width="10" height="1" fill="#e3e3e3"/>
<rect x="808" y="186" width="1" height="11" fill="#e3e3e3"/>
<path d="M800.8 191.5 L803.5 195 L807.2 189.5" fill="none" stroke="#000" stroke-width="2"/>
<rect x="714" y="219" width="466" height="1" fill="#a0a0a0"/>
<rect x="714" y="219" width="1" height="667" fill="#a0a0a0"/>
<rect x="715" y="220" width="465" height="1" fill="#696969"/>
<rect x="715" y="220" width="1" height="665" fill="#696969"/>
<rect x="716" y="221" width="463" height="664" fill="#ffffe1" />
<rect x="716" y="579" width="460" height="306" fill="#a9a9a9" />
<rect x="1179" y="220" width="1" height="666" fill="#a0a0a0"/>
<rect x="1180" y="219" width="1" height="668" fill="#fff"/>
<rect x="714" y="885" width="467" height="1" fill="#fff"/>
<rect x="714" y="886" width="467" height="1" fill="#fff"/>
<text x="720" y="235.6" font-family="Liberation Mono" font-size="11.667" fill="#16168c" font-style="italic">About this example:</text>
<text x="720" y="249.6" font-family="Liberation Mono" font-size="11.667" fill="#16168c" font-style="italic">-------------------</text>
<text x="720" y="263.6" font-family="Liberation Mono" font-size="11.667" fill="#16168c" font-style="italic">This is a model of a "TimeBomb" presented in lesson #39 of the</text>
<text x="720" y="277.6" font-family="Liberation Mono" font-size="11.667" fill="#16168c" font-style="italic">"Modern Embedded Programming" video course. The "TimeBomb" state</text>
<text x="720" y="291.6" font-family="Liberation Mono" font-size="11.667" fill="#16168c" font-style="italic">machine is independent from any specific board, but assumes the</text>
<text x="720" y="305.6" font-family="Liberation Mono" font-size="11.667" fill="#16168c" font-style="italic">presence of a few LEDs, which are controlled via a BSP (Board</text>
<text x="720" y="319.6" font-family="Liberation Mono" font-size="11.667" fill="#16168c" font-style="italic">Support Package)</text>
<text x="720" y="347.6" font-family="Liberation Mono" font-size="11.667" fill="#16168c" font-style="italic">This example demonstrates:</text>
<text x="720" y="361.6" font-family="Liberation Mono" font-size="11.667" fill="#16168c" font-style="italic">- Active object (TimeBomb) with state machine</text>
<text x="720" y="375.6" font-family="Liberation Mono" font-size="11.667" fill="#16168c" font-style="italic">- Board Support Package abstraction for portability</text>
<text x="720" y="403.6" font-family="Liberation Mono" font-size="11.667" fill="#16168c" font-style="italic">Building the example:</text>
<text x="720" y="417.6" font-family="Liberation Mono" font-size="11.667" fill="#16168c" font-style="italic">---------------------</text>
<text x="720" y="431.6" font-family="Liberation Mono" font-size="11.667" fill="#16168c" font-style="italic">To build this example, you will need the QP/C framework installed</text>
<text x="720" y="445.6" font-family="Liberation Mono" font-size="11.667" fill="#16168c" font-style="italic">on your computer and the KEIL uVision toolset (could be the free</text>
<text x="720" y="459.6" font-family="Liberation Mono" font-size="11.667" fill="#16168c" font-style="italic">edition).</text>
<text x="720" y="487.6" font-family="Liberation Mono" font-size="11.667" fill="#16168c" font-style="italic">Running the example:</text>
<text x="720" y="501.6" font-family="Liberation Mono" font-size="11.667" fill="#16168c" font-style="italic">--------------------</text>
<text x="720" y="515.6" font-family="Liberation Mono" font-size="11.667" fill="#16168c" font-style="italic">This example can be run on the TivaC LaunchPad board, but should</text>
<text x="720" y="529.6" font-family="Liberation Mono" font-size="11.667" fill="#16168c" font-style="italic">be also easy to port to other boards.</text>
<text x="720" y="557.6" font-family="Liberation Mono" font-size="11.667" fill="#16168c" font-style="italic">For more QM examples for QP/C see:</text>
<rect x="762" y="561" width="252" height="14" fill="#ebebe6" />
<text x="720" y="571.6" font-family="Liberation Mono" font-size="11.667" fill="#16168c" font-style="italic">https:</text>
<text x="762" y="571.6" font-family="Liberation Mono" font-size="11.667" fill="#007000" font-style="italic">//www.state-machine.com/qpc/exa.html</text>
<rect x="720" y="378" width="1" height="14" fill="#000"/>
<rect x="1187" y="86" width="1" height="802" fill="#f0f0f0"/>
<rect x="1191" y="88" width="27" height="1" fill="#a0a0a0"/>
<rect x="1191" y="92" width="27" height="1" fill="#a0a0a0"/>
<rect x="1191" y="89" width="27" height="1" fill="#fff"/>
<rect x="1191" y="93" width="27" height="1" fill="#fff"/>
<rect x="1189.5" y="97.5" width="29" height="28" fill="#f7f7f7" stroke="#dcdcdc"/>
<path d="M1197.5 102.5 V120 L1201.5 116 L1204.5 122.5 L1207.5 121 L1204.5 114.5 H1210.5 Z" fill="#fff" stroke="#5a6fa0" stroke-width="1.1"/>
<path d="M1199 144 Q1196 139 1198 137 L1200 139 V134 Q1201.5 132.5 1203 134 V133 Q1204.5 131.5 1206 133 V134 Q1207.5 132.5 1209 134 V136 Q1210.5 135 1212 136.5 V144 Q1212 150 1206 150 H1204 Q1201 150 1199 144 Z" fill="#fff" stroke="#333" stroke-width="1.1"/>
<rect x="1204" y="163" width="11" height="18" fill="#9ccbee"/>
<circle cx="1200" cy="165" r="4.5" fill="none" stroke="#777" stroke-width="1"/><circle cx="1200" cy="165" r="2.5" fill="none" stroke="#777" stroke-width="1"/>
<path d="M1199 176 Q1196 171 1198 170 L1200 172 V164 Q1201.5 162.5 1203 164 V168 Q1204.5 166.5 1206 168 V169 Q1207.5 167.5 1209 169 V170 Q1210.5 169 1212 170.5 V177 Q1212 183 1206 183 H1204 Q1201 183 1199 176 Z" fill="#fff" stroke="#333" stroke-width="1.1"/>
<rect x="1191" y="190" width="27" height="1" fill="#a0a0a0"/>
<rect x="1191" y="191" width="27" height="1" fill="#fff"/>
<rect x="1193.5" y="200.5" width="22" height="15" rx="3" fill="#9abde8" stroke="#5576a8"/>
<path d="M1196 229.5 H1205.5 V247" fill="none" stroke="#3b94d9" stroke-width="1.1"/><path d="M1201.5 243 L1205.5 247 L1209.5 243" fill="none" stroke="#3b94d9" stroke-width="1.1"/>
<path d="M1200 258.5 L1205 263.5 L1200 268.5 L1195 263.5 Z" fill="#fff" stroke="#666"/><path d="M1200 268.5 V275" stroke="#3b94d9"/><rect x="1198.5" y="275.5" width="3" height="3" fill="#fff" stroke="#666"/><path d="M1205 262.5 H1209.5 V278" fill="none" stroke="#3b94d9" stroke-width="1.1"/><path d="M1206 274.5 L1209.5 278 L1213 274.5" fill="none" stroke="#3b94d9" stroke-width="1.1"/>
<circle cx="1198.5" cy="291.5" r="3.5" fill="#999" stroke="#777"/><path d="M1202 291.5 H1209.5 V305" fill="none" stroke="#3b94d9" stroke-width="1.1"/><path d="M1206 301.5 L1209.5 305 L1213 301.5" fill="none" stroke="#3b94d9" stroke-width="1.1"/>
<circle cx="1198.5" cy="322.5" r="5" fill="#fff" stroke="#777"/><text x="1195.5" y="326" font-family="Liberation Sans" font-size="8" font-weight="bold" fill="#3b94d9">H</text><path d="M1203.5 322.5 H1209.5 V337" fill="none" stroke="#3b94d9" stroke-width="1.1"/><path d="M1206 333.5 L1209.5 337 L1213 333.5" fill="none" stroke="#3b94d9" stroke-width="1.1"/>
<rect x="1193.5" y="350.5" width="22" height="15" rx="3" fill="#b5d49a" stroke="#6f9a50"/><path d="M1198 358 H1211" stroke="#555"/><ellipse cx="1200" cy="358" rx="2.5" ry="1.8" fill="#fff" stroke="#555"/><ellipse cx="1209" cy="358" rx="2.5" ry="1.8" fill="#fff" stroke="#555"/>
<circle cx="1198.5" cy="381.5" r="4.5" fill="#fff" stroke="#e84040"/><path d="M1196 379 L1201 384 M1201 379 L1196 384" stroke="#e84040"/><path d="M1203 382.5 H1209.5 V399" fill="none" stroke="#3b94d9" stroke-width="1.1"/><path d="M1206 395.5 L1209.5 399 L1213 395.5" fill="none" stroke="#3b94d9" stroke-width="1.1"/>
<text x="7" y="906" font-family="Liberation Sans" font-size="12" fill="#000" >Ready</text>
<rect x="906" y="891" width="155" height="1" fill="#a0a0a0"/>
<rect x="906" y="891" width="1" height="22" fill="#a0a0a0"/>
<rect x="906" y="912" width="155" height="1" fill="#fff"/>
<rect x="1060" y="891" width="1" height="22" fill="#fff"/>
<rect x="1064" y="891" width="87" height="1" fill="#a0a0a0"/>
<rect x="1064" y="891" width="1" height="22" fill="#a0a0a0"/>
<rect x="1064" y="912" width="87" height="1" fill="#fff"/>
<rect x="1150" y="891" width="1" height="22" fill="#fff"/>
<rect x="1154" y="891" width="24" height="1" fill="#a0a0a0"/>
<rect x="1154" y="891" width="1" height="22" fill="#a0a0a0"/>
<rect x="1154" y="912" width="24" height="1" fill="#fff"/>
<rect x="1177" y="891" width="1" height="22" fill="#fff"/>
<rect x="1180" y="891" width="24" height="1" fill="#a0a0a0"/>
<rect x="1180" y="891" width="1" height="22" fill="#a0a0a0"/>
<rect x="1180" y="912" width="24" height="1" fill="#fff"/>
<rect x="1203" y="891" width="1" height="22" fill="#fff"/>
<circle cx="916.5" cy="900" r="5.8" fill="#fff" stroke="#222" stroke-width="1.1"/><path d="M920.8 904.3 L924.8 908.5" stroke="#222" stroke-width="1.3"/><path d="M912.5 900 H920.5" stroke="#2a8ae0" stroke-width="1.4"/>
<circle cx="1024.5" cy="900" r="5.8" fill="#fff" stroke="#222" stroke-width="1.1"/><path d="M1028.8 904.3 L1032.8 908.5" stroke="#222" stroke-width="1.3"/><path d="M1020.5 900 H1028.5 M1024.5 896 V904" stroke="#2a8ae0" stroke-width="1.4"/>
<circle cx="1046.7" cy="900" r="5.8" fill="#fff" stroke="#222" stroke-width="1.1"/><path d="M1051.0 904.3 L1055.0 908.5" stroke="#222" stroke-width="1.3"/><text x="1043.8" y="904.5" font-family="Liberation Sans" font-size="9.5" font-weight="bold" fill="#2a8ae0">1</text>
<rect x="930" y="898" width="83" height="1" fill="#777"/>
<rect x="930" y="899" width="83" height="1" fill="#a0a0a0"/>
<rect x="972" y="892" width="11" height="16" fill="#f0f0f0" />
<rect x="972" y="892" width="11" height="1" fill="#fff"/>
<rect x="972" y="892" width="1" height="16" fill="#fff"/>
<rect x="982" y="892" width="1" height="16" fill="#696969"/>
<rect x="972" y="907" width="11" height="1" fill="#696969"/>
<rect x="1156" y="894" width="16" height="16" fill="#fff" />
<path d="M1163.5 894 V910 M1156 901.5 H1172" stroke="#d0d0d0" stroke-dasharray="2 1"/><rect x="1158" y="896" width="1" height="1" fill="#bbb"/><rect x="1168" y="896" width="2" height="1" fill="#ddd"/><rect x="1158" y="906" width="1" height="1" fill="#ccc"/><rect x="1168" y="906" width="1" height="1" fill="#ddd"/>
<path d="M1187.5 895.5 Q1190 893 1192 893.5 Q1194.5 894.5 1194.5 898 V901" fill="none" stroke="#333" stroke-width="1.3"/>
<rect x="1184.5" y="901.5" width="11" height="8" fill="#fbd98a" stroke="#e8701e" stroke-width="1.1"/><rect x="1189.5" y="904.5" width="1.5" height="3" fill="#e08840"/>
<path d="M1210 914 L1222 902 M1214 914 L1222 906 M1218 914 L1222 910" stroke="#a8a8a8" stroke-width="1.2"/><path d="M1211 914 L1222 903 M1215 914 L1222 907 M1219 914 L1222 911" stroke="#fff" stroke-width="0.6"/>
<rect x="4" y="55" width="2" height="25" fill="#fff" />
<rect x="7" y="55" width="2" height="25" fill="#fff" />
<rect x="6" y="55" width="1" height="26" fill="#a0a0a0"/>
<rect x="9" y="55" width="1" height="26" fill="#a0a0a0"/>
<rect x="4" y="80" width="6" height="1" fill="#a0a0a0"/>
<path d="M20.5 57.5 H30.5 L36.5 63.5 V78.5 H20.5 Z" fill="#fff" stroke="#666" stroke-width="1"/><path d="M30.5 57.5 V63.5 H36.5" fill="none" stroke="#666"/>
<circle cx="21.5" cy="74" r="5.2" fill="#e07a6c" stroke="#c05040"/><path d="M21.5 70.5 V77.5 M18 74 H25" stroke="#fff" stroke-width="1.1"/>
<path d="M49.5 63.5 H55 L57 65 H66.5 V70 H49.5 Z" fill="#fff" stroke="#e06a58"/><path d="M48.5 67.5 H68.5 L67 78.5 H50 Z" fill="#f09a8a" stroke="#e06a58"/><path d="M58 56.5 H66 L70 60" fill="none" stroke="#e06a58" stroke-width="1.3"/><path d="M66.5 61 L70.5 61 L70.5 57" fill="none" stroke="#e06a58" stroke-width="1.2"/>
<path d="M82.5 70 V57.5 H92.5 L98.5 63.5 V78.5 H88" fill="#fff" stroke="#e06a58" stroke-width="1"/><path d="M92.5 57.5 V63.5 H98.5" fill="none" stroke="#e06a58"/><path d="M88.5 72 A5 5 0 1 0 88.7 78" fill="none" stroke="#444" stroke-width="1.2"/><path d="M85.5 71.5 H89 V68" fill="none" stroke="#444" stroke-width="1.1"/>
<path d="M110.5 57.5 H131.5 V78.5 H113 L110.5 76 Z" fill="#e0b8e4" stroke="#b888c0"/><rect x="113.5" y="58" width="14" height="8" fill="#fff" stroke="#b888c0" stroke-width="0.8"/><rect x="116.5" y="71.5" width="10" height="7" fill="#fff" stroke="#b888c0" stroke-width="0.8"/><path d="M118.5 73 V76" stroke="#555"/>
<rect x="138" y="51" width="1" height="33" fill="#a0a0a0"/>
<rect x="139" y="51" width="1" height="33" fill="#fff"/>
<rect x="142" y="55" width="2" height="25" fill="#fff" />
<rect x="145" y="55" width="2" height="25" fill="#fff" />
<rect x="144" y="55" width="1" height="26" fill="#a0a0a0"/>
<rect x="147" y="55" width="1" height="26" fill="#a0a0a0"/>
<rect x="142" y="80" width="6" height="1" fill="#a0a0a0"/>
<path d="M156 67.5 L163 60.5 M156 67.5 L163 74 M156 67.5 H170 Q176.5 67.5 176.5 72.5 Q176.5 78.5 169 78.5" fill="none" stroke="#3cb06a" stroke-width="1.1"/>
<path d="M207 64.5 L200.5 58 M207 64.5 L200.5 71 M207 64.5 H194 Q187.5 64.5 187.5 70.5 Q187.5 76.5 194 76.5" fill="none" stroke="#bbb" stroke-width="1.1"/>
<rect x="216" y="55" width="1" height="26" fill="#a0a0a0"/>
<path d="M229 58 L238 73 M239 58 L230 73" stroke="#999" stroke-width="1.2"/><circle cx="229" cy="76" r="3.2" fill="none" stroke="#aaa" stroke-width="1.1"/><circle cx="239" cy="76" r="3.2" fill="none" stroke="#aaa" stroke-width="1.1"/>
<path d="M253.5 57.5 H263 L266 60.5 V74.5 H253.5 Z" fill="#fff" stroke="#aaa"/><path d="M260.5 62.5 H271 L276.5 68 V78.5 H260.5 Z" fill="#fff" stroke="#888"/><path d="M263 67 H273 M263 70 H274 M263 73 H274 M263 76 H274" stroke="#bbb"/>
<rect x="284.5" y="58.5" width="15" height="19" fill="#fff" stroke="#e05a48" stroke-width="1.5"/><path d="M289 58.5 Q289 55.5 292 55.5 Q295 55.5 295 58.5 H297 V61 H287 V58.5 Z" fill="#fff" stroke="#e05a48"/><path d="M294.5 64.5 H302 L306.5 69 V79.5 H294.5 Z" fill="#fff" stroke="#8a5048" stroke-width="1.1"/>
<rect x="315" y="55" width="1" height="26" fill="#a0a0a0"/>
<path d="M321.5 57.5 H334.5 V63 M321.5 57.5 V78.5 H332" fill="none" stroke="#aaa"/><path d="M326 66.5 H343 M339 62.5 L343 66.5 L339 70.5" fill="none" stroke="#bbb" stroke-width="1.2"/><path d="M333 75 Q333 72 336 72 H340 Q343 72 343 75 Q343 78 340 78 H336 Q333 78 333 75 Z M336 75 Q336 72 339 72" fill="none" stroke="#bbb"/>
<path d="M353.5 57.5 H367.5 V78.5 H362 M353.5 57.5 V63" fill="none" stroke="#aaa"/><path d="M376 66.5 H359 M363 62.5 L359 66.5 L363 70.5" fill="none" stroke="#bbb" stroke-width="1.2"/><path d="M353 75 Q353 72 356 72 H360 Q363 72 363 75 Q363 78 360 78 H356 Q353 78 353 75 Z" fill="none" stroke="#bbb"/>
<rect x="383" y="55" width="1" height="26" fill="#a0a0a0"/>
<path d="M395.5 67 V62 Q395.5 56.5 400.5 56.5 Q405.5 56.5 405.5 62 V67" fill="none" stroke="#8a5048" stroke-width="1.3"/><rect x="392.5" y="66.5" width="16" height="12" fill="#f29a8a" stroke="#e05a48" stroke-width="1.2"/><path d="M400.5 71 V73" stroke="#b03020"/>
<rect x="417.5" y="53.5" width="29" height="29" fill="#f6f6f6" stroke="#d8d8d8"/>
<path d="M427.5 67 V62 Q427.5 57.5 432 57.5 Q436.5 57.5 436.5 62 V63" fill="none" stroke="#5576a8" stroke-width="1.3"/><rect x="424.5" y="67.5" width="17" height="12" fill="#9abde8" stroke="#5576a8" stroke-width="1.2"/><path d="M432.5 72 V74" stroke="#335"/>
<rect x="449" y="51" width="1" height="33" fill="#a0a0a0"/>
<rect x="450" y="51" width="1" height="33" fill="#fff"/>
<rect x="453" y="55" width="2" height="25" fill="#fff" />
<rect x="456" y="55" width="2" height="25" fill="#fff" />
<rect x="455" y="55" width="1" height="26" fill="#a0a0a0"/>
<rect x="458" y="55" width="1" height="26" fill="#a0a0a0"/>
<rect x="453" y="80" width="6" height="1" fill="#a0a0a0"/>
<rect x="462.5" y="53.5" width="29" height="29" fill="#f6f6f6" stroke="#d8d8d8"/>
<rect x="469" y="60" width="9" height="6" transform="rotate(-35 473.5 63)" fill="#f7c46a" stroke="#e09030"/><rect x="481" y="63" width="6" height="4" transform="rotate(-35 484 65)" fill="#d8a4d6" stroke="#b07ab0"/><rect x="481" y="72" width="6" height="4" transform="rotate(-35 484 74)" fill="#7fb0e0" stroke="#4f8fd0"/><path d="M474 66 V74 H481" fill="none" stroke="#444"/>
<rect x="493.5" y="53.5" width="29" height="29" fill="#f6f6f6" stroke="#d8d8d8"/>
<circle cx="511" cy="65" r="7" fill="#fff" stroke="#6d9bd8" stroke-width="1.2"/><path d="M506 70 L498 78" stroke="#6d9bd8" stroke-width="1.3"/>
<rect x="524.5" y="53.5" width="29" height="29" fill="#f6f6f6" stroke="#d8d8d8"/>
<path d="M532.5 58 V79 M539.5 58 V79 M546.5 58 V79" stroke="#777" stroke-width="1.1"/><circle cx="532.5" cy="64.5" r="2.5" fill="#7fb0e0" stroke="#4f8fd0"/><circle cx="539.5" cy="73.5" r="2.5" fill="#7fb0e0" stroke="#4f8fd0"/><circle cx="546.5" cy="67.5" r="2.5" fill="#7fb0e0" stroke="#4f8fd0"/>
<path d="M558 68 Q570 56 582 68 Q570 80 558 68 Z" fill="#fff" stroke="#5576a8" stroke-width="1.2"/><circle cx="570" cy="68" r="5" fill="#6d9bd8" stroke="#4a6ea8"/><circle cx="570" cy="68" r="2" fill="#1a2a50"/>
<rect x="586.5" y="53.5" width="29" height="29" fill="#f6f6f6" stroke="#d8d8d8"/>
<rect x="591.5" y="58.5" width="22" height="19" fill="#fff" stroke="#666"/><rect x="592" y="59" width="21" height="3" fill="#7fb0e0"/><path d="M594 66 H611 M594 69 H611 M594 72 H611 M594 75 H611" stroke="#999"/>
<rect x="617.5" y="53.5" width="29" height="29" fill="#f6f6f6" stroke="#d8d8d8"/>
<path d="M626.5 58.5 V75 L630.5 71 L634 78 L637 76.5 L634 69.5 H640 Z" fill="#fff" stroke="#5576a8" stroke-width="1.2"/>
<rect x="651" y="55" width="1" height="26" fill="#a0a0a0"/>
<rect x="657" y="56" width="24" height="24" fill="#fbfbfb"/><rect x="669" y="57" width="1" height="1" fill="#b0b0b0"/><rect x="669" y="59" width="1" height="1" fill="#b0b0b0"/><rect x="669" y="61" width="1" height="1" fill="#b0b0b0"/><rect x="669" y="63" width="1" height="1" fill="#b0b0b0"/><rect x="669" y="65" width="1" height="1" fill="#b0b0b0"/><rect x="669" y="67" width="1" height="1" fill="#b0b0b0"/><rect x="669" y="69" width="1" height="1" fill="#b0b0b0"/><rect x="669" y="71" width="1" height="1" fill="#b0b0b0"/><rect x="669" y="73" width="1" height="1" fill="#b0b0b0"/><rect x="669" y="75" width="1" height="1" fill="#b0b0b0"/><rect x="669" y="77" width="1" height="1" fill="#b0b0b0"/><rect x="669" y="79" width="1" height="1" fill="#b0b0b0"/><rect x="658" y="67" width="1" height="1" fill="#b0b0b0"/><rect x="660" y="67" width="1" height="1" fill="#b0b0b0"/><rect x="662" y="67" width="1" height="1" fill="#b0b0b0"/><rect x="664" y="67" width="1" height="1" fill="#b0b0b0"/><rect x="666" y="67" width="1" height="1" fill="#b0b0b0"/><rect x="668" y="67" width="1" height="1" fill="#b0b0b0"/><rect x="670" y="67" width="1" height="1" fill="#b0b0b0"/><rect x="672" y="67" width="1" height="1" fill="#b0b0b0"/><rect x="674" y="67" width="1" height="1" fill="#b0b0b0"/><rect x="676" y="67" width="1" height="1" fill="#b0b0b0"/><rect x="678" y="67" width="1" height="1" fill="#b0b0b0"/><rect x="680" y="67" width="1" height="1" fill="#b0b0b0"/><rect x="661" y="59" width="1" height="1" fill="#aaa"/><rect x="677" y="59" width="1" height="1" fill="#aaa"/><rect x="661" y="75" width="1" height="1" fill="#aaa"/><path d="M676 77 H682 L679 80 Z" fill="#000"/>
<rect x="686" y="51" width="1" height="33" fill="#a0a0a0"/>
<rect x="687" y="51" width="1" height="33" fill="#fff"/>
<rect x="690" y="55" width="2" height="25" fill="#fff" />
<rect x="693" y="55" width="2" height="25" fill="#fff" />
<rect x="692" y="55" width="1" height="26" fill="#a0a0a0"/>
<rect x="695" y="55" width="1" height="26" fill="#a0a0a0"/>
<rect x="690" y="80" width="6" height="1" fill="#a0a0a0"/>
<rect x="702" y="56" width="24" height="24" fill="#c8001e"/><text x="703.5" y="76" font-family="Liberation Sans" font-size="17" font-style="italic" fill="#fff" textLength="21" lengthAdjust="spacingAndGlyphs">GPL</text>
<rect x="733" y="55" width="1" height="26" fill="#a0a0a0"/>
<path d="M739.5 68 V78.5 H762.5 V68" fill="none" stroke="#5576a8" stroke-width="1.2"/><path d="M751 56 V67 M746.5 62.5 L751 67 L755.5 62.5" fill="none" stroke="#3b94d9" stroke-width="1.2"/><path d="M743 72.5 H759 M745 75.5 H757" stroke="#3b94d9" stroke-dasharray="2 2"/>
<rect x="770" y="55" width="1" height="26" fill="#a0a0a0"/>
<g transform="translate(772,52)"><path d="M4.5 24 L15.5 13 L18 15.5 L7 26.5 Q5 26.5 4.5 24 Z" fill="#fff" stroke="#a8a8a8"/><path d="M12.5 5.8 Q18 4 21.5 7.5 L23.5 10.5 L28 13.5 L24 17.5 L21.5 14 Q19.5 12.5 17.5 12.5 Q17.5 8.5 12.5 5.8 Z" fill="#fff" stroke="#a8a8a8"/></g>
<g transform="translate(803,52)"><path d="M4.5 24 L15.5 13 L18 15.5 L7 26.5 Q5 26.5 4.5 24 Z" fill="#fff" stroke="#a8a8a8"/><path d="M12.5 5.8 Q18 4 21.5 7.5 L23.5 10.5 L28 13.5 L24 17.5 L21.5 14 Q19.5 12.5 17.5 12.5 Q17.5 8.5 12.5 5.8 Z" fill="#fff" stroke="#a8a8a8"/></g>
<g transform="translate(834,52)"><path d="M4.5 24 L15.5 13 L18 15.5 L7 26.5 Q5 26.5 4.5 24 Z" fill="#fff" stroke="#a8a8a8"/><path d="M12.5 5.8 Q18 4 21.5 7.5 L23.5 10.5 L28 13.5 L24 17.5 L21.5 14 Q19.5 12.5 17.5 12.5 Q17.5 8.5 12.5 5.8 Z" fill="#fff" stroke="#a8a8a8"/></g>
<g transform="translate(865,52)"><path d="M4.5 24 L15.5 13 L18 15.5 L7 26.5 Q5 26.5 4.5 24 Z" fill="#fff" stroke="#a8a8a8"/><path d="M12.5 5.8 Q18 4 21.5 7.5 L23.5 10.5 L28 13.5 L24 17.5 L21.5 14 Q19.5 12.5 17.5 12.5 Q17.5 8.5 12.5 5.8 Z" fill="#fff" stroke="#a8a8a8"/></g>
<g transform="translate(896,52)"><path d="M4.5 24 L15.5 13 L18 15.5 L7 26.5 Q5 26.5 4.5 24 Z" fill="#fff" stroke="#a8a8a8"/><path d="M12.5 5.8 Q18 4 21.5 7.5 L23.5 10.5 L28 13.5 L24 17.5 L21.5 14 Q19.5 12.5 17.5 12.5 Q17.5 8.5 12.5 5.8 Z" fill="#fff" stroke="#a8a8a8"/></g>
<rect x="931" y="55" width="1" height="26" fill="#a0a0a0"/>
<path d="M944.5 57.5 H953.5 L960.5 64.5 V73.5 L953.5 80.5 H944.5 L937.5 73.5 V64.5 Z" fill="#f8f8f8" stroke="#bbb" stroke-width="1.2"/><path d="M944 64 L954 74 M954 64 L944 74" stroke="#bbb" stroke-width="1.2"/>
<rect x="968" y="55" width="1" height="26" fill="#a0a0a0"/>
<g transform="translate(972,52)"><path d="M4.5 24 L15.5 13 L18 15.5 L7 26.5 Q5 26.5 4.5 24 Z" fill="#4a9ee0" stroke="#2a70b0"/><path d="M12.5 5.8 Q18 4 21.5 7.5 L23.5 10.5 L28 13.5 L24 17.5 L21.5 14 Q19.5 12.5 17.5 12.5 Q17.5 8.5 12.5 5.8 Z" fill="#a0a0a0" stroke="#707070"/></g>
<g transform="translate(993,75)"><circle cx="0" cy="0" r="4" fill="#fff" stroke="#b05050" stroke-width="1.6" stroke-dasharray="1.6 1"/><circle cx="0" cy="0" r="1.6" fill="none" stroke="#b05050" stroke-width="1"/></g>
<g transform="translate(9,7)"><rect x="0.5" y="0.5" width="15" height="15" rx="1.5" fill="#1838a8" stroke="#0c1a60"/><path d="M8 0.5 H14 Q15.5 0.5 15.5 2 V14 Q15.5 15.5 14 15.5 H8 Z" fill="#f0102a"/><path d="M1 1 H15 V6 Q8 8 1 6 Z" fill="#fff" opacity="0.25"/><circle cx="4.6" cy="5.2" r="2.1" fill="none" stroke="#fff" stroke-width="1.2"/><path d="M6.9 3 V10" stroke="#fff" stroke-width="1.2"/><circle cx="11.2" cy="5.2" r="2.1" fill="none" stroke="#fff" stroke-width="1.2"/><path d="M9 3 V10" stroke="#fff" stroke-width="1.2"/><path d="M3.5 12 Q8 13.5 12.5 12" fill="none" stroke="#fff" stroke-width="0.8" opacity="0.8"/><path d="M1 15 H15" stroke="#000830" stroke-width="1"/></g>
<rect x="0" y="0" width="1" height="915" fill="#0078d7"/>
<rect x="1222" y="0" width="1" height="915" fill="#0078d7"/>
<rect x="0" y="914" width="1223" height="1" fill="#0078d7"/></svg></body></html>
